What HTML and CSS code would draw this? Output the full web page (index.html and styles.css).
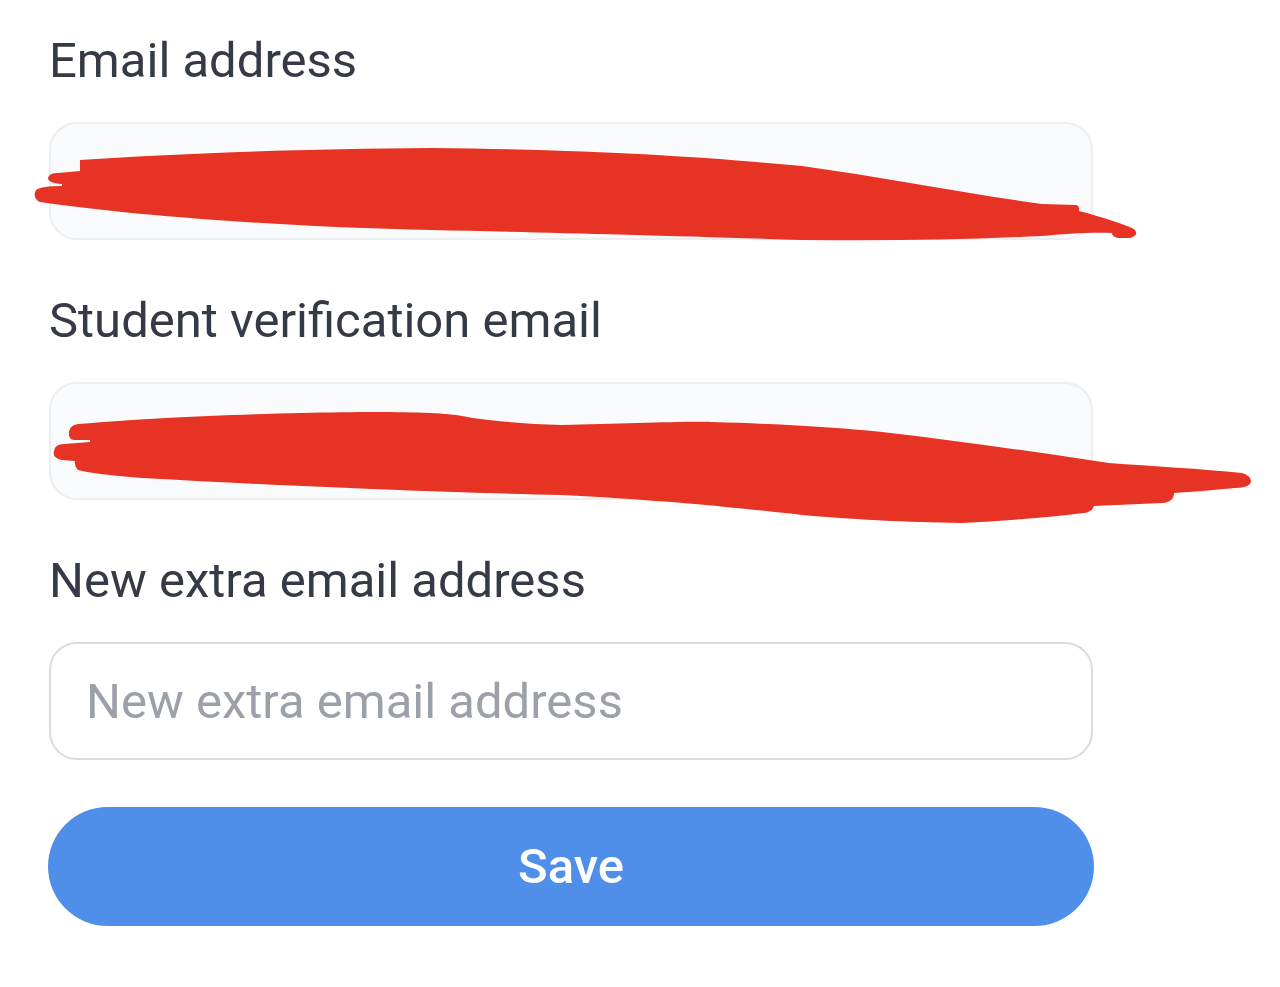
FILE: index.html
```html
<!DOCTYPE html>
<html lang="en">
<head>
<meta charset="utf-8">
<title>Email settings</title>
<link rel="stylesheet" href="styles.css">
</head>
<body>
<form class="form">
  <div class="field">
    <label class="label">Email address</label>
    <div class="box box-filled">
      <svg class="scribble" viewBox="0 122 1280 150" width="1280" height="150" aria-hidden="true">
        <path d="M 78 160 C 180 153, 300 149, 430 148 C 600 150, 700 157, 800 166 C 880 177, 960 193, 1040 204 L 1074 205 Q 1078 206, 1077 211 C 1100 217, 1122 224, 1132 229 Q 1138 235, 1128 238 L 1116 238 Q 1110 237, 1110 233 C 1090 232, 1060 234, 1040 236 C 960 240, 880 241, 800 240 C 650 235, 520 232, 430 230 C 320 228, 200 220, 120 212 C 90 209, 60 205, 38 202 Q 30 198, 34 190 Q 40 186, 60 186 L 60 184 Q 46 183, 46 178 Q 47 173, 56 173 L 78 171 Z"/>
      </svg>
    </div>
  </div>
  <div class="field">
    <label class="label">Student verification email</label>
    <div class="box box-filled">
      <svg class="scribble" viewBox="0 382 1280 150" width="1280" height="150" aria-hidden="true">
        <path d="M 76 424 C 150 418, 210 415, 300 413 C 380 411, 440 412, 460 416 C 480 420, 520 424, 560 425 C 620 424, 680 421, 710 422 C 780 424, 840 428, 880 432 C 950 440, 1020 450, 1087 460 L 1107 463 C 1150 466, 1200 469, 1240 473 Q 1252 477, 1248 484 Q 1244 488, 1233 488 C 1210 490, 1190 492, 1172 493 Q 1172 502, 1160 503 L 1092 506 Q 1090 512, 1082 513 C 1040 518, 1000 521, 960 523 C 900 522, 860 520, 800 515 C 740 508, 660 500, 560 495 C 460 493, 320 488, 140 478 Q 90 474, 76 470 Q 72 466, 73 461 L 60 460 Q 50 458, 52 451 Q 53 444, 62 444 L 88 442 L 88 440 L 72 440 Q 66 439, 67 432 Q 68 425, 76 424 Z"/>
      </svg>
    </div>
  </div>
  <div class="field field-last">
    <label class="label" for="extra">New extra email address</label>
    <input class="box box-input" id="extra" type="email" placeholder="New extra email address">
  </div>
  <button class="save" type="button">Save</button>
</form>
</body>
</html>
```

FILE: styles.css
```css
html, body {
  margin: 0;
  padding: 0;
  background: #ffffff;
}

body {
  font-family: Roboto, "Liberation Sans", Arial, sans-serif;
  color: #343a46;
}

.form {
  width: 1046px;
  margin-left: 48px;
  padding-top: 33px;
  display: flex;
  flex-direction: column;
}

.field {
  display: flex;
  flex-direction: column;
  margin-bottom: 53px;
}

.field-last {
  margin-bottom: 47px;
}

.label {
  font-size: 49px;
  line-height: 56px;
  font-weight: 400;
  color: #343a46;
  margin-bottom: 33px;
  padding-left: 1px;
}

.box {
  position: relative;
  box-sizing: border-box;
  height: 118px;
  margin: 0 1px;
  border-radius: 28px;
}

.box-filled {
  background: #fafbfc;
  border: 2px solid #eceef1;
}

.box-input {
  display: block;
  width: calc(100% - 2px);
  border: 2px solid #dadcdf;
  background: #ffffff;
  padding: 0 0 0 35px;
  font-family: Roboto, "Liberation Sans", Arial, sans-serif;
  font-size: 49px;
  color: #343a46;
  outline: none;
}

.box-input::placeholder {
  color: #9ca1a9;
  opacity: 1;
}

.scribble {
  position: absolute;
  left: -49px;
  top: -2px;
  overflow: visible;
  fill: #e63323;
}

.save {
  display: block;
  width: 100%;
  height: 119px;
  border: none;
  border-radius: 60px;
  background: #4f8fea;
  color: #ffffff;
  font-family: Roboto, "Liberation Sans", Arial, sans-serif;
  font-size: 49px;
  font-weight: 500;
  cursor: pointer;
}
```
